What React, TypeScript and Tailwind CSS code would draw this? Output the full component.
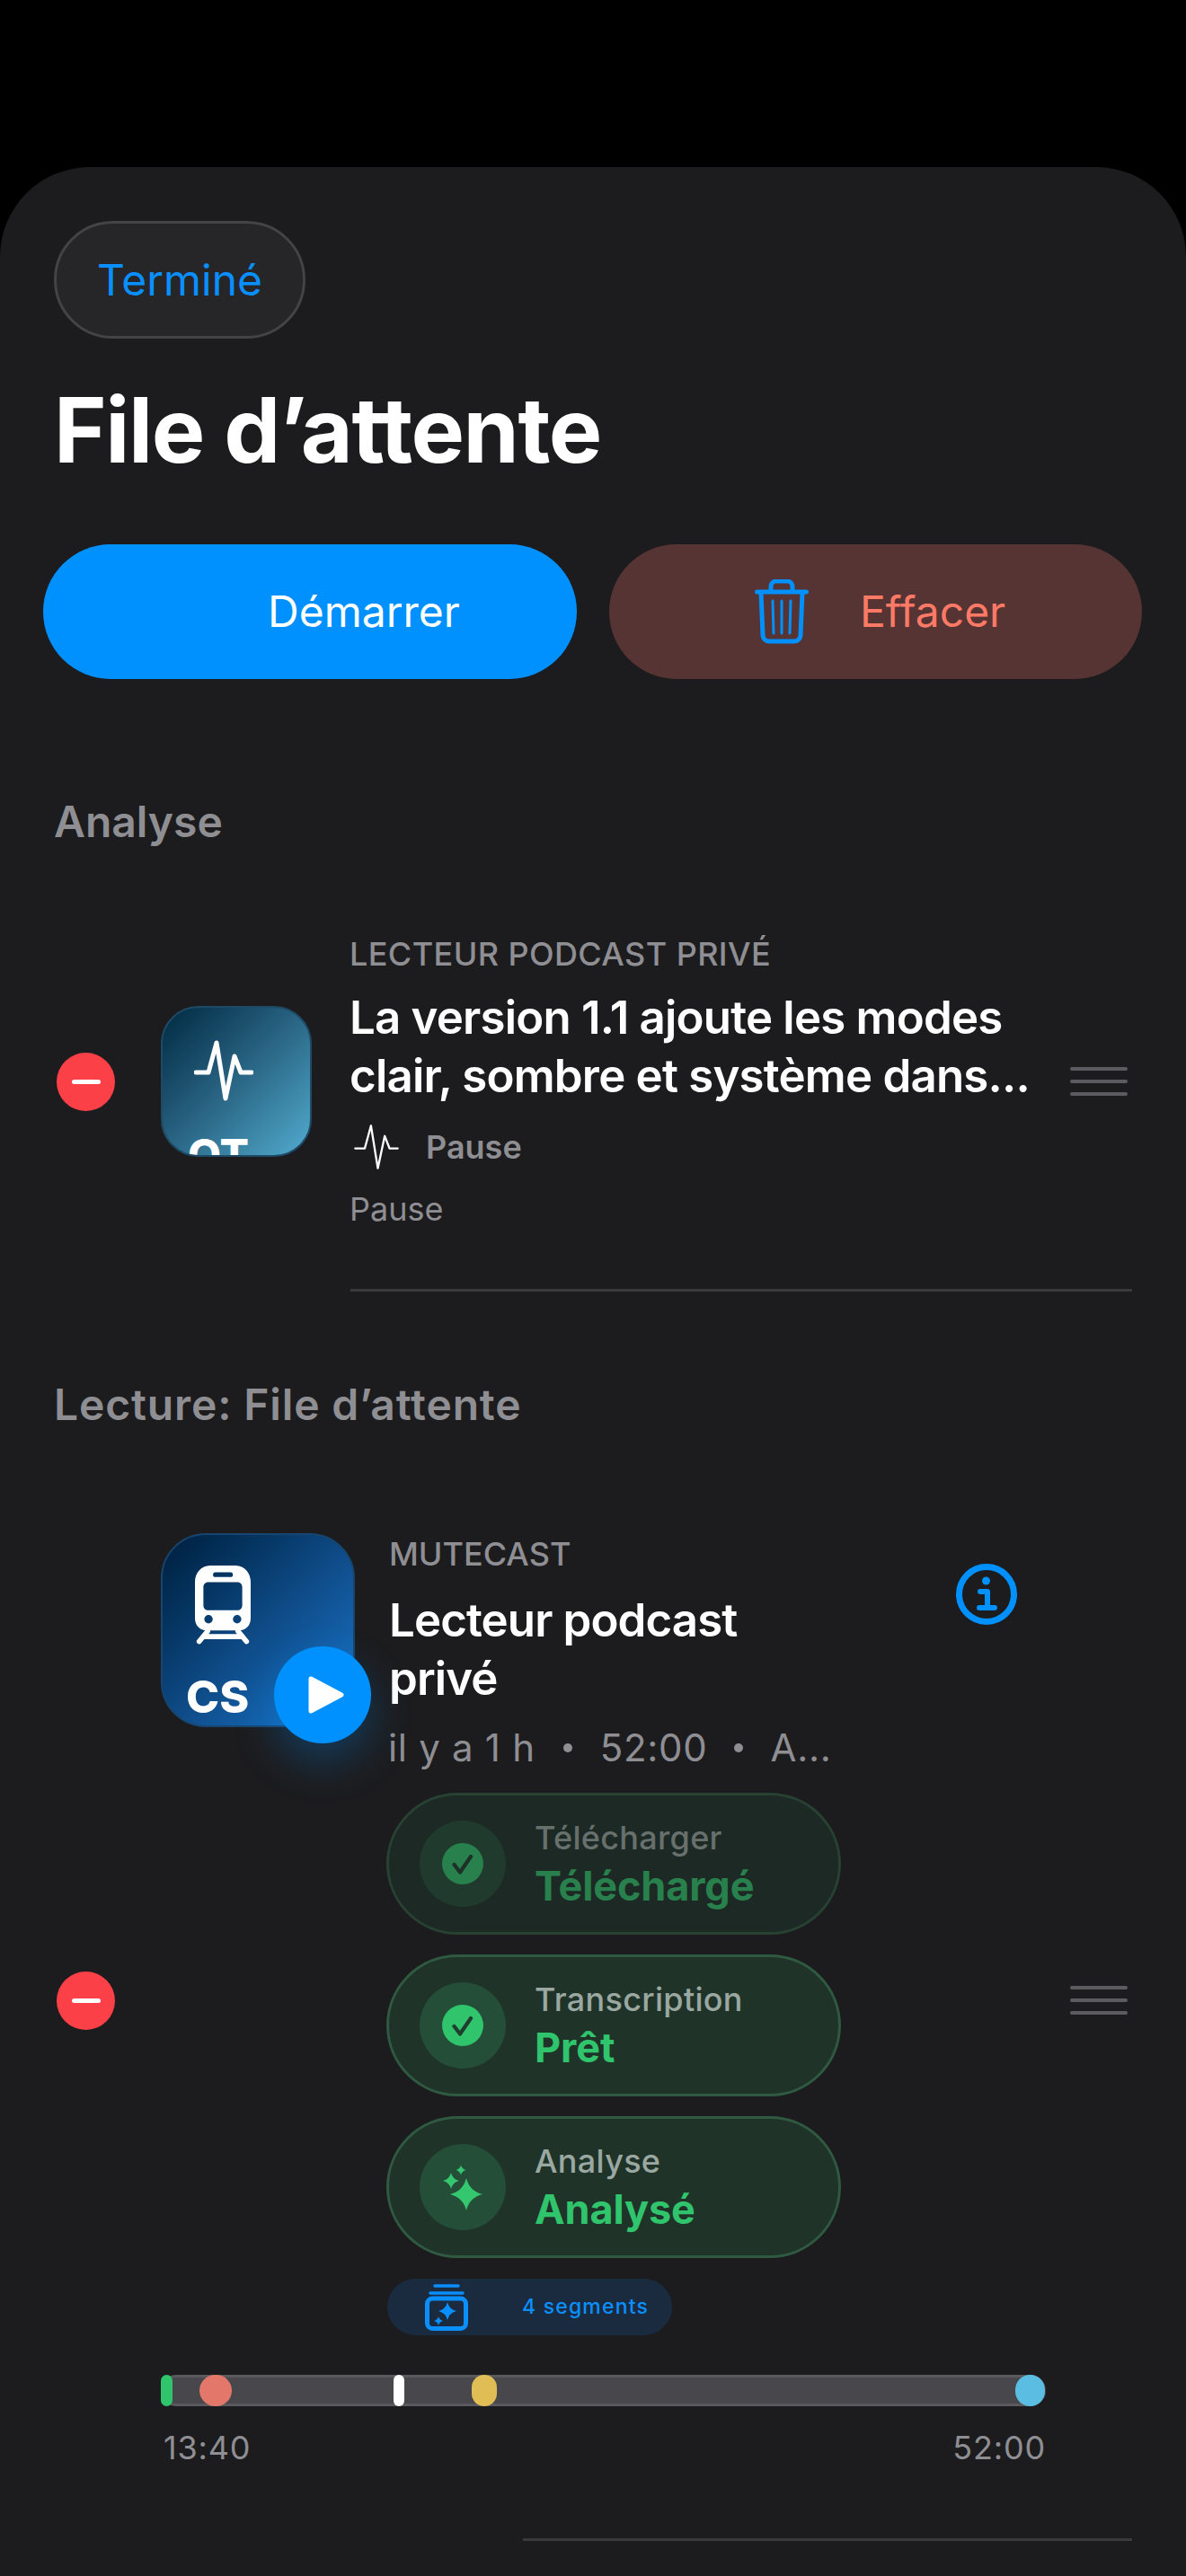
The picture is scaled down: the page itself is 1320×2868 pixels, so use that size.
import React from "react";

function star(cx: number, cy: number, r: number, k = 0.2) {
  const o = r * k;
  return `M${cx} ${cy - r}Q${cx + o} ${cy - o} ${cx + r} ${cy}Q${cx + o} ${cy + o} ${cx} ${cy + r}Q${cx - o} ${cy + o} ${cx - r} ${cy}Q${cx - o} ${cy - o} ${cx} ${cy - r}Z`;
}

function Wave({ className, sw }: { className: string; sw: number }) {
  return (
    <svg viewBox="0 0 66 68" className={className} fill="none" stroke="white" strokeWidth={sw} strokeLinecap="round" strokeLinejoin="round">
      <path d="M2 36H16L25 3L35 65L45 18L52 36H64" />
    </svg>
  );
}

function Minus() {
  return (
    <div className="flex h-[65px] w-[65px] shrink-0 items-center justify-center rounded-full bg-[#fb4048]">
      <div className="h-[5px] w-[32px] rounded-full bg-white" />
    </div>
  );
}

function Handle() {
  return (
    <div className="flex w-[64px] shrink-0 flex-col gap-[10px]">
      <div className="h-[4px] rounded-full bg-[#5c5c60]" />
      <div className="h-[4px] rounded-full bg-[#5c5c60]" />
      <div className="h-[4px] rounded-full bg-[#5c5c60]" />
    </div>
  );
}

function Check({ color }: { color: string }) {
  return (
    <svg viewBox="0 0 46 46" className="h-[46px] w-[46px]">
      <circle cx="23" cy="23" r="23" fill={color} />
      <path d="M13.5 24L20 32.5L32 15" fill="none" stroke="#1f3f2e" strokeWidth="4.2" strokeLinecap="round" strokeLinejoin="round" />
    </svg>
  );
}

function Sparkles() {
  return (
    <svg viewBox="0 0 56 64" className="h-[64px] w-[56px] shrink-0" fill="#34c76f">
      <path d={star(32, 40, 18)} />
      <path d={star(15, 25, 9)} />
      <path d={star(26, 13, 5.5)} />
    </svg>
  );
}

function Status({ label, value, icon, dim }: { label: string; value: string; icon: React.ReactNode; dim?: boolean }) {
  return (
    <div className={`flex h-[158px] w-[506px] items-center rounded-full border-[3px] border-[#2f5a41] bg-[#1f3329] pl-[34px] ${dim ? "opacity-60" : ""}`}>
      <div className="flex h-[96px] w-[96px] shrink-0 items-center justify-center rounded-full bg-[#244e37]">{icon}</div>
      <div className="ml-[32px] flex flex-col">
        <span className="text-[36px] leading-[50px] font-medium tracking-[0.3px] text-[#9aa8a1]">{label}</span>
        <span className="text-[45px] leading-[58px] font-bold tracking-[-0.1px] text-[#30c46c]">{value}</span>
      </div>
    </div>
  );
}

export default function App() {
  return (
    <div className="h-[2868px] w-[1320px] overflow-hidden bg-black pt-[186px] [font-family:Inter,'Noto_Sans',sans-serif]">
      <div className="h-[2682px] rounded-t-[100px] bg-[#1c1c1e]">
        <div className="pt-[60px] pl-[60px]">
          <div className="flex h-[131px] w-[280px] items-center justify-center rounded-full border-[3px] border-[#444447] bg-[#262628] text-[48px] text-[#0a8fff]">
            Terminé
          </div>
        </div>
        <h1 className="mt-[42px] pl-[60px] text-[100px] leading-[120px] font-bold tracking-[-1.4px] text-white">File d’attente</h1>

        <div className="mt-[67px] flex gap-[36px] pl-[48px]">
          <div className="flex h-[150px] w-[594px] items-center rounded-[75px] bg-[#0091ff] pl-[250px] text-[48px] text-white">Démarrer</div>
          <div className="flex h-[150px] w-[593px] items-center rounded-[75px] bg-[#553433] pl-[162px] text-[48px] text-[#ff7a66]">
            <svg viewBox="0 0 60 72" className="h-[72px] w-[60px]" fill="none" stroke="#0091ff" strokeLinecap="round">
              <path d="M2.5 14H57.5" strokeWidth="5" />
              <path d="M18 13V8a6 6 0 0 1 6-6H36a6 6 0 0 1 6 6V13" strokeWidth="5" />
              <path d="M7 15L9 62a7 7 0 0 0 7 7H44a7 7 0 0 0 7-7L53 15" strokeWidth="5" />
              <path d="M20 24L21 60M30 24V60M40 24L39 60" strokeWidth="3" />
            </svg>
            <span className="ml-[57px]">Effacer</span>
          </div>
        </div>

        <h2 className="mt-[130px] pl-[60px] text-[48px] leading-[58px] font-semibold text-[#8e8e93]">Analyse</h2>

        <div className="mt-[95px] flex h-[330px] items-center pl-[63px]">
          <Minus />
          <div className="ml-[51px] flex h-[168px] w-[168px] shrink-0 flex-col items-start overflow-hidden rounded-[42px] border-[2px] border-[#1e4a66] bg-gradient-to-br from-[#022a42] via-[#2a6685] to-[#52accf] pt-[36px] pl-[35px]">
            <Wave className="h-[68px] w-[66px] shrink-0" sw={5} />
            <span className="mt-[30px] ml-[-7px] shrink-0 text-[48px] leading-[60px] font-extrabold text-white">OT</span>
          </div>
          <div className="ml-[42px] flex w-[780px] shrink-0 flex-col">
            <span className="text-[36px] leading-[46px] font-medium tracking-[0.4px] text-[#8e8e93]">LECTEUR PODCAST PRIVÉ</span>
            <span className="mt-[15px] w-[770px] text-[51px] leading-[65px] font-semibold tracking-[-0.8px] text-white">
              La version 1.1 ajoute les modes
              <br />
              clair, sombre et système dans...
            </span>
            <div className="mt-[19px] flex h-[56px] items-center pl-[4px]">
              <Wave className="h-[52px] w-[52px] shrink-0" sw={3} />
              <span className="ml-[29px] text-[36px] font-semibold text-[#8e8e93]">Pause</span>
            </div>
            <span className="mt-[18px] text-[36px] leading-[46px] text-[#8e8e93]">Pause</span>
          </div>
          <div className="ml-[22px]">
            <Handle />
          </div>
        </div>

        <div className="mt-[66px] ml-[390px] h-[3px] w-[870px] bg-[#3a3a3c]" />

        <h2 className="mt-[97px] pl-[60px] text-[48px] leading-[58px] font-semibold tracking-[0.85px] text-[#8e8e93]">Lecture: File d’attente</h2>

        <div className="mt-[114px] flex items-center pl-[63px]">
          <Minus />
          <div className="ml-[51px] w-[1011px] shrink-0">
            <div className="flex">
              <div className="relative h-[216px] w-[216px] shrink-0">
                <div className="flex h-full w-full flex-col items-start rounded-[50px] border-[2px] border-[#17456f] bg-gradient-to-br from-[#001f3d] via-[#0e4a85] to-[#1a78cf] pt-[34px] pl-[36px]">
                  <svg viewBox="0 0 185 262" className="h-[88px] w-[62px] shrink-0" fill="white">
                    <path
                      fillRule="evenodd"
                      d="M50 0H135C165 0 185 25 185 55V175C185 198 170 215 145 215H40C15 215 0 198 0 175V55C0 25 20 0 50 0ZM68 22a8 8 0 0 0 0 16H118a8 8 0 0 0 0-16ZM45 55C34 55 28 62 28 72V130C28 142 34 148 45 148H140C151 148 157 142 157 130V72C157 62 151 55 140 55ZM45 164a14 14 0 1 0 0 28a14 14 0 0 0 0-28ZM140 164a14 14 0 1 0 0 28a14 14 0 0 0 0-28Z"
                    />
                    <path d="M42 218L14 252M143 218L171 252M30 236H155" fill="none" stroke="white" strokeWidth="17" strokeLinecap="round" />
                  </svg>
                  <span className="mt-[23px] ml-[-10px] shrink-0 text-[50px] leading-[70px] font-extrabold text-white">CS</span>
                </div>
                <div className="absolute top-[126px] left-[126px] flex h-[108px] w-[108px] items-center justify-center rounded-full bg-[#0091ff] shadow-[0_20px_48px_rgba(0,145,255,0.28)]">
                  <svg viewBox="0 0 40 44" className="ml-[8px] h-[44px] w-[40px]" fill="white" stroke="white" strokeWidth="5" strokeLinejoin="round">
                    <path d="M3 4L37 22L3 40Z" />
                  </svg>
                </div>
              </div>
              <div className="ml-[38px] flex flex-col">
                <div className="flex items-start">
                  <div className="w-[631px]">
                    <div className="text-[36px] leading-[46px] font-medium text-[#8e8e93]">MUTECAST</div>
                    <div className="mt-[18px] w-[440px] text-[51px] leading-[65px] font-semibold tracking-[-0.9px] text-white">Lecteur podcast privé</div>
                  </div>
                  <svg viewBox="0 0 68 68" className="mt-[34px] h-[68px] w-[68px] shrink-0" fill="none" stroke="#0091ff">
                    <circle cx="34" cy="34" r="30.5" strokeWidth="7" />
                    <circle cx="33.5" cy="19" r="4.5" fill="#0091ff" stroke="none" />
                    <path d="M27 31H35V49M26 49H43" strokeWidth="6" strokeLinecap="round" strokeLinejoin="round" />
                  </svg>
                </div>
              </div>
            </div>
            <div className="mt-[-5px] ml-[253px] flex items-center text-[42px] leading-[56px] tracking-[0.7px] text-[#8e8e93]">
              <span>il y a 1 h</span>
              <span className="mx-[31px] h-[10px] w-[10px] rounded-full bg-[#8e8e93]" />
              <span>52:00</span>
              <span className="mx-[30px] h-[10px] w-[10px] rounded-full bg-[#8e8e93]" />
              <span>A...</span>
            </div>
            <div className="mt-[22px] ml-[251px] flex flex-col gap-[22px]">
              <Status label="Télécharger" value="Téléchargé" dim icon={<Check color="#30c46c" />} />
              <Status label="Transcription" value="Prêt" icon={<Check color="#30c46c" />} />
              <Status label="Analyse" value="Analysé" icon={<Sparkles />} />
            </div>
            <div className="mt-[23px] ml-[252px] flex h-[63px] w-[317px] items-center rounded-full bg-[#1a2b3f] pl-[42px]">
              <svg viewBox="0 0 48 52" className="h-[52px] w-[48px]" fill="none" stroke="#0a8fff">
                <path d="M11 2H37M6 10H42" strokeWidth="3.5" strokeLinecap="round" />
                <rect x="2.5" y="16" width="43" height="33.5" rx="6" strokeWidth="5" />
                <path d={star(25, 30, 10)} fill="#0a8fff" stroke="none" />
                <path d={star(15, 41, 5)} fill="#0a8fff" stroke="none" />
              </svg>
              <span className="ml-[60px] text-[23px] font-medium tracking-[1.2px] text-[#0a8fff]">4 segments</span>
            </div>
            <div className="relative mt-[44px] h-[35px] w-[985px] rounded-full border-y-[3px] border-[#5a5a5e] bg-[#48484c]">
              <div className="absolute top-[-3px] left-0 h-[35px] w-[13px] rounded-full bg-[#30c46c]" />
              <div className="absolute top-[-3px] left-[43px] h-[35px] w-[36px] rounded-full bg-[#e2776a]" />
              <div className="absolute top-[-3px] left-[259px] h-[35px] w-[12px] rounded-full bg-white" />
              <div className="absolute top-[-3px] left-[346px] h-[35px] w-[28px] rounded-full bg-[#e0bd55]" />
              <div className="absolute top-[-3px] left-[951px] h-[35px] w-[33px] rounded-full bg-[#5bbde2]" />
            </div>
            <div className="mt-[24px] flex w-[985px] justify-between pl-[3px] text-[36px] leading-[44px] tracking-[0.8px] text-[#8e8e93]">
              <span>13:40</span>
              <span>52:00</span>
            </div>
          </div>
          <div className="ml-[1px]">
            <Handle />
          </div>
        </div>

        <div className="mt-[79px] ml-[582px] h-[3px] w-[678px] bg-[#3a3a3c]" />
      </div>
    </div>
  );
}
